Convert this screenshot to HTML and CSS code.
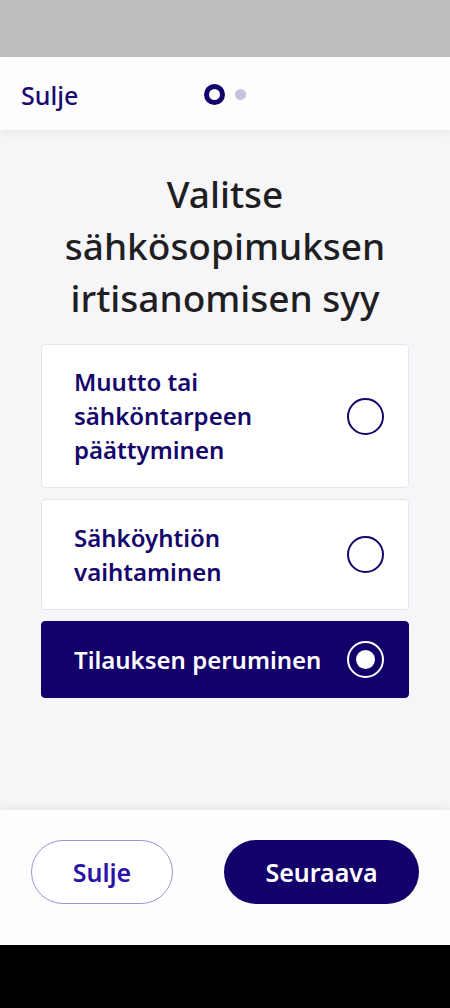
FILE: index.html
```html
<!DOCTYPE html>
<html lang="fi">
<head>
<meta charset="utf-8">
<link rel="stylesheet" href="styles.css">
</head>
<body>
<div class="app">
  <div class="statusbar"></div>
  <header class="header">
    <span class="header-close">Sulje</span>
    <div class="steps">
      <span class="step step-active"></span>
      <span class="step"></span>
    </div>
  </header>
  <main class="content">
    <h1 class="title">Valitse sähkösopimuksen irtisanomisen syy</h1>
    <div class="options">
      <div class="option option-tall">
        <span class="option-text">Muutto tai<br>sähköntarpeen<br>päättyminen</span>
        <span class="radio"></span>
      </div>
      <div class="option option-mid">
        <span class="option-text">Sähköyhtiön<br>vaihtaminen</span>
        <span class="radio"></span>
      </div>
      <div class="option option-short option-selected">
        <span class="option-text">Tilauksen peruminen</span>
        <span class="radio radio-checked"></span>
      </div>
    </div>
  </main>
  <footer class="footer">
    <button class="btn btn-outline">Sulje</button>
    <button class="btn btn-primary">Seuraava</button>
  </footer>
  <div class="navbar"></div>
</div>
</body>
</html>
```

FILE: styles.css
```css
* { box-sizing: border-box; }
html, body { margin: 0; padding: 0; }
body {
  width: 450px;
  height: 1008px;
  overflow: hidden;
  font-family: "Noto Sans", "Open Sans", sans-serif;
  background: #f6f6f9;
}
.app {
  display: flex;
  flex-direction: column;
  height: 1008px;
}
.statusbar {
  height: 57px;
  background: #bebebe;
  flex: none;
}
.header {
  height: 73px;
  flex: none;
  background: #fdfdfd;
  display: flex;
  align-items: center;
  padding-left: 21px;
  position: relative;
  z-index: 2;
  box-shadow: 0 3px 8px rgba(0,0,0,0.06);
}
.header-close {
  font-size: 25px;
  font-weight: 500;
  color: #1a0a6e;
  padding-top: 2px;
  width: 58px;
}
.steps {
  display: flex;
  align-items: center;
  gap: 10px;
  margin-left: 125px;
  padding-top: 1px;
}
.step {
  width: 11px;
  height: 11px;
  border-radius: 50%;
  background: #c4c4de;
}
.step-active {
  width: 21px;
  height: 21px;
  background: transparent;
  border: 5.5px solid #14006b;
}
.content {
  flex: 1;
  display: flex;
  flex-direction: column;
  align-items: center;
  padding-top: 38px;
}
.title {
  margin: 0;
  width: 350px;
  text-align: center;
  font-size: 37px;
  font-weight: 500;
  line-height: 52px;
  color: #1f1f23;
  letter-spacing: 0;
}
.options {
  margin-top: 20px;
  width: 368px;
  display: flex;
  flex-direction: column;
  gap: 11px;
}
.option {
  display: flex;
  align-items: center;
  justify-content: space-between;
  background: #ffffff;
  border: 1.5px solid #e6e5ef;
  border-radius: 4px;
  padding: 0 24px 0 32px;
  color: #14066b;
}
.option-tall { height: 144px; }
.option-mid { height: 111px; }
.option-short { height: 77px; }
.option-text {
  font-size: 24px;
  font-weight: 600;
  line-height: 34px;
}
.option-selected {
  background: #14006b;
  border-color: #14006b;
  color: #ffffff;
}
.radio {
  width: 37px;
  height: 37px;
  flex: none;
  border-radius: 50%;
  border: 2.5px solid #14066b;
  display: flex;
  align-items: center;
  justify-content: center;
}
.radio-checked {
  border-color: #ffffff;
}
.radio-checked::after {
  content: "";
  width: 19px;
  height: 19px;
  border-radius: 50%;
  background: #ffffff;
}
.footer {
  height: 135px;
  flex: none;
  background: #fdfdfd;
  display: flex;
  align-items: center;
  justify-content: space-between;
  padding: 0 31px 12px;
  box-shadow: 0 -3px 8px rgba(0,0,0,0.06);
  position: relative;
  z-index: 2;
}
.btn {
  height: 64px;
  border-radius: 32px;
  font-family: "Noto Sans", "Open Sans", sans-serif;
  font-size: 25px;
  font-weight: 600;
  padding: 0;
  margin: 0;
}
.btn-outline {
  width: 142px;
  background: #ffffff;
  border: 1.5px solid #9d94cf;
  color: #2a14a8;
}
.btn-primary {
  width: 195px;
  background: #14006b;
  border: none;
  color: #ffffff;
}
.navbar {
  height: 63px;
  flex: none;
  background: #000000;
}
```
